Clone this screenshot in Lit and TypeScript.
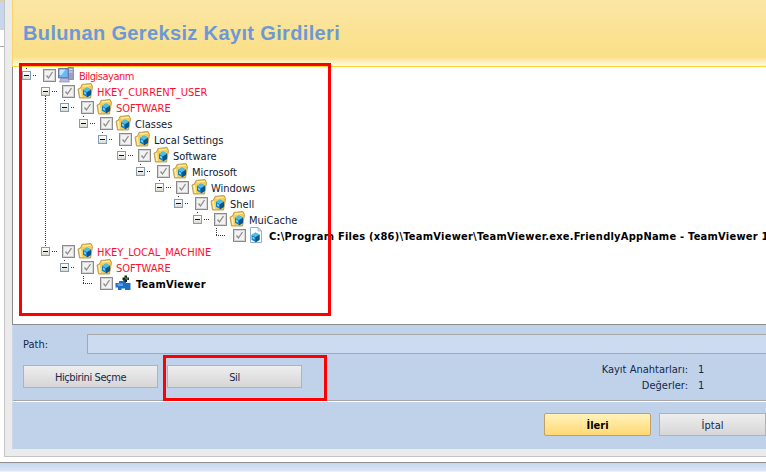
import { LitElement, html, css, svg, nothing } from "lit";
import { customElement } from "lit/decorators.js";

type Kind = "pc" | "key" | "doc" | "app";
interface Row { d: number; label: string; kind: Kind; red?: boolean; bold?: boolean; leaf?: boolean; guide?: boolean; up?: boolean; down?: boolean; stub?: boolean; tight?: boolean; }

const rows: Row[] = [
  { d: 0, label: "Bilgisayarım", kind: "pc", red: true, stub: true, tight: true },
  { d: 1, label: "HKEY_CURRENT_USER", kind: "key", red: true, down: true },
  { d: 2, label: "SOFTWARE", kind: "key", red: true, guide: true, stub: true },
  { d: 3, label: "Classes", kind: "key", guide: true, stub: true },
  { d: 4, label: "Local Settings", kind: "key", guide: true, stub: true },
  { d: 5, label: "Software", kind: "key", guide: true, stub: true },
  { d: 6, label: "Microsoft", kind: "key", guide: true, stub: true },
  { d: 7, label: "Windows", kind: "key", guide: true, stub: true },
  { d: 8, label: "Shell", kind: "key", guide: true, stub: true },
  { d: 9, label: "MuiCache", kind: "key", guide: true, stub: true },
  { d: 10, label: "C:\\Program Files (x86)\\TeamViewer\\TeamViewer.exe.FriendlyAppName - TeamViewer 1", kind: "doc", bold: true, leaf: true, guide: true },
  { d: 1, label: "HKEY_LOCAL_MACHINE", kind: "key", red: true, up: true },
  { d: 2, label: "SOFTWARE", kind: "key", red: true, stub: true },
  { d: 3, label: "TeamViewer", kind: "app", bold: true, leaf: true },
];

const cube = (x: number, y: number) => svg`
  <path d="M${x} ${y + 3}l4-2.500 4 2.200v4.800l-4 2.500-4-2.200z" fill="#1380c4"/>
  <path d="M${x} ${y + 3}l4 2.200 4-2.500-4-2.200z" fill="#4cc0ea"/>
  <path d="M${x + 4} ${y + 5.2}v5.300l4-2.500v-5.300z" fill="#0a5688"/>
  <path d="M${x + 1} ${y + 4.5}l2 1.200v2l-2-1.200z" fill="#7fd6f2"/>`;

const icons: Record<Kind, unknown> = {
  pc: svg`<svg width="16" height="16" viewBox="0 0 16 16">
    <path d="M10 .5h5.500v12H10z" fill="#9a9fc4" stroke="#74799f" stroke-width=".7"/>
    <path d="M11 2h3.500v1H11zM11 4.500h3.500v1H11z" fill="#dfe2f2"/>
    <path d="M.5 1.500h10v9.500H.5z" fill="#4f8fdc" stroke="#6f78a8"/>
    <path d="M1.500 2.500h8v7.500h-8z" fill="#6cb8f2"/>
    <path d="M1.500 2.500h6l-4 5.500h-2z" fill="#bfe6fc"/>
    <path d="M3 11.500h7l1.500 3.500H1.500z" fill="#b6bad6" stroke="#7b80a6" stroke-width=".6"/>
  </svg>`,
  key: svg`<svg width="16" height="16" viewBox="0 0 16 16">
    <path d="M1 6l2.500-1 1.500-3.500 9-1 1.500 3-2 11.500H2.500z" fill="#f5cc58" stroke="#b3944a" stroke-width=".9"/>
    <path d="M2.200 6.500l1.300 7.500h1.500L4 6zM5.500 2.500l8-.8.500 1-7.500 1z" fill="#fff0b4"/>
    ${cube(6, 4)}
  </svg>`,
  doc: svg`<svg width="16" height="16" viewBox="0 0 16 16">
    <path d="M2.500.5h7.500l3.500 3.500v11.500h-11z" fill="#fff" stroke="#8fb0d4"/>
    <path d="M10 .5v3.500h3.500z" fill="#d5e5f5" stroke="#8fb0d4" stroke-width=".7"/>
    ${cube(3.5, 5)}
  </svg>`,
  app: svg`<svg width="16" height="16" viewBox="0 0 16 16">
    <path d="M.5 8H4V6h4V4.500h3V8h4.500v7H10v-1.500H6.500V15H3v-2.500H.5z" fill="#1d6fc4"/>
    <path d="M2.500 8.500H8v2.500H2.500z" fill="#5aa6e6"/>
    <path d="M9.500 .5H12v2h2V5h-2v2H9.500V5h-2V2.500h2z" fill="#18251c"/>
    <path d="M10.500 2h.8v1.500H13v1h-2.500z" fill="#45b34e"/>
  </svg>`,
};

@customElement("app-root")
export class AppRoot extends LitElement {
  static styles = css`
    :host { display: block; width: 766px; height: 472px; position: relative; overflow: hidden; background: #fff; font-family: "DejaVu Sans Condensed", "Liberation Sans", sans-serif; font-size: 11px; color: #15284c; }
    .top { display: flex; height: 457px; }
    .side { width: 4px; flex: none; display: flex; flex-direction: column; }
    .side-a { height: 30px; background: #c6d6ec; border-top: 2px solid #e6cfa0; box-sizing: border-box; }
    .side-b { height: 16px; background: #fff; }
    .side-c { flex: 1; border-top: 1px solid #a8a8a8; background: #fff; }
    .frame { flex: 1; min-width: 0; background: #ebebeb; border-left: 1px solid #c4c4c4; border-bottom: 1px solid #c4c4c4; padding: 0 0 7px 7px; display: flex; flex-direction: column; }
    .head { height: 67px; flex: none; box-sizing: border-box; border-left: 1px solid #f7d46c; border-bottom: 1px solid #fbd62f; background: linear-gradient(#fae6a6 0, #fbe08a 50px, #fbe08a 57px, #fef9e2 65px); padding: 22px 0 0 10px; }
    .title { font-family: "Liberation Sans", Arial, sans-serif; font-size: 20px; line-height: 23px; font-weight: bold; color: #6c98d7; letter-spacing: 0.36px; white-space: nowrap; }
    .tree { height: 258px; flex: none; overflow: hidden; background: #fff; border-left: 1px solid #8c8c8c; border-bottom: 1px solid #8c8c8c; padding-left: 4px; box-sizing: border-box; color: #10202f; }
    .row { display: flex; align-items: center; height: 16px; white-space: nowrap; }
    .cell { width: 19px; height: 16px; flex: none; position: relative; }
    .vline { position: absolute; left: 9px; width: 1px; background: repeating-linear-gradient(#333 0 1px, transparent 1px 2px); }
    .guide { top: 0; height: 16px; }
    .up { top: 0; height: 4px; }
    .down { top: 13px; height: 3px; }
    .stub { top: 1px; height: 1px; }
    .elbow { top: 1px; height: 8px; }
    .hline { position: absolute; top: 8px; height: 1px; background: repeating-linear-gradient(90deg, #333 0 1px, transparent 1px 2px); }
    .h-even { left: 16px; width: 3px; }
    .h-odd { left: 16px; width: 5px; }
    .h-leaf { left: 9px; width: 10px; }
    .exp { position: absolute; left: 5px; top: 4px; width: 9px; height: 9px; box-sizing: border-box; border: 1px solid #7e9db9; background: linear-gradient(#fff, #dcdcd4); display: flex; align-items: center; justify-content: center; }
    .exp i { display: block; width: 5px; height: 1px; background: #111; }
    .check { margin-left: 7px; width: 13px; height: 13px; flex: none; display: block; }
    .icon { margin-left: 2px; width: 16px; height: 16px; flex: none; }
    .icon svg { display: block; }
    .text { margin-left: 4px; padding-top: 2px; }
    .red { color: #fb1030; }
    .tight { letter-spacing: -0.5px; margin-left: 5px; }
    .bold { font-weight: bold; color: #000; letter-spacing: 0.25px; margin-left: 5px; }
    .panel { flex: 1; min-height: 0; background: #bfd2e9; border-left: 1px solid #c9d8ec; display: flex; flex-direction: column; }
    .path-row { display: flex; align-items: center; height: 20px; margin-top: 9px; flex: none; }
    .path-label { width: 64px; padding-left: 10px; box-sizing: content-box; flex: none; }
    .input { flex: 1; height: 20px; box-sizing: border-box; background: #ccdbf0; border: 1px solid #a8a8a8; border-right: 0; }
    .act-row { display: flex; height: 47px; flex: none; box-sizing: border-box; padding: 11px 0 0 10px; gap: 9px; border-bottom: 1px solid #a6a6a6; }
    .btn { width: 135px; height: 23px; box-sizing: border-box; padding-top: 1px; border: 1px solid #b2b2b2; background: linear-gradient(#eeeeee, #d6d6d6); display: flex; align-items: center; justify-content: center; flex: none; letter-spacing: -0.4px; }
    .stats { margin-left: auto; margin-right: 62px; display: grid; grid-template-columns: auto 16px; row-gap: 3px; margin-top: -2px; line-height: 13px; text-align: right; align-content: start; }
    .stats span:nth-child(even) { text-align: left; padding-left: 10px; }
    .foot { flex: 1; border-top: 1px solid #fff; display: flex; justify-content: flex-end; padding-top: 11px; gap: 8px; box-sizing: border-box; }
    .go { width: 107px; padding-top: 2px; border-color: #c2a06a; border-radius: 2px; background: linear-gradient(#fff3bb, #ffd874); font-weight: bold; color: #000; letter-spacing: 0; }
    .cancel { width: 107px; padding-top: 2px; letter-spacing: 0; }
    .strip { height: 15px; display: flex; flex-direction: column; }
    .strip-w { height: 5px; background: #fff; }
    .strip-b { height: 8px; border-top: 1px solid #8f8f8f; background: linear-gradient(#c5d6ee, #dbe6f4); }
    .strip-l { flex: 1; background: #eaf1fa; }
    .mark { position: absolute; border: 3px solid #ff0000; box-sizing: border-box; pointer-events: none; }
    .m-tree { left: 19px; top: 63px; width: 312px; height: 253px; }
    .m-sil { left: 163px; top: 355px; width: 164px; height: 46px; }
  `;

  private checkbox() {
    return svg`<svg class="check" viewBox="0 0 13 13"><rect x=".5" y=".5" width="12" height="12" fill="#f2f2f2" stroke="#8a8a8a"/><rect x="1.500" y="1.500" width="10" height="10" fill="none" stroke="#d4d4d4"/><path d="M3.500 6.500l2 2.500 4-6" fill="none" stroke="#8c8c8c" stroke-width="1.300"/></svg>`;
  }

  private row(r: Row) {
    const cells = [];
    for (let i = 0; i < r.d; i++) cells.push(html`<div class="cell">${r.guide && i === 1 ? html`<div class="vline guide"></div>` : nothing}</div>`);
    return html`<div class="row">
      ${cells}
      <div class="cell">
        ${r.leaf
          ? html`<div class="vline elbow"></div><div class="hline h-leaf"></div>`
          : html`
              ${r.stub ? html`<div class="vline stub"></div>` : nothing}
              ${r.up ? html`<div class="vline up"></div>` : nothing}
              ${r.down ? html`<div class="vline down"></div>` : nothing}
              <div class="exp"><i></i></div>
              <div class="hline ${r.d % 2 ? "h-odd" : "h-even"}"></div>`}
      </div>
      ${this.checkbox()}
      <div class="icon">${icons[r.kind]}</div>
      <span class="text ${r.red ? "red" : ""} ${r.bold ? "bold" : ""} ${r.tight ? "tight" : ""}">${r.label}</span>
    </div>`;
  }

  render() {
    return html`
      <div class="top">
        <div class="side"><div class="side-a"></div><div class="side-b"></div><div class="side-c"></div></div>
        <div class="frame">
          <div class="head"><div class="title">Bulunan Gereksiz Kayıt Girdileri</div></div>
          <div class="tree">${rows.map((r) => this.row(r))}</div>
          <div class="panel">
            <div class="path-row"><div class="path-label">Path:</div><div class="input"></div></div>
            <div class="act-row">
              <div class="btn">Hiçbirini Seçme</div>
              <div class="btn">Sil</div>
              <div class="stats">
                <span>Kayıt Anahtarları:</span><span>1</span>
                <span>Değerler:</span><span>1</span>
              </div>
            </div>
            <div class="foot">
              <div class="btn go">İleri</div>
              <div class="btn cancel">İptal</div>
            </div>
          </div>
        </div>
      </div>
      <div class="strip"><div class="strip-w"></div><div class="strip-b"></div><div class="strip-l"></div></div>
      <div class="mark m-tree"></div>
      <div class="mark m-sil"></div>
    `;
  }
}
